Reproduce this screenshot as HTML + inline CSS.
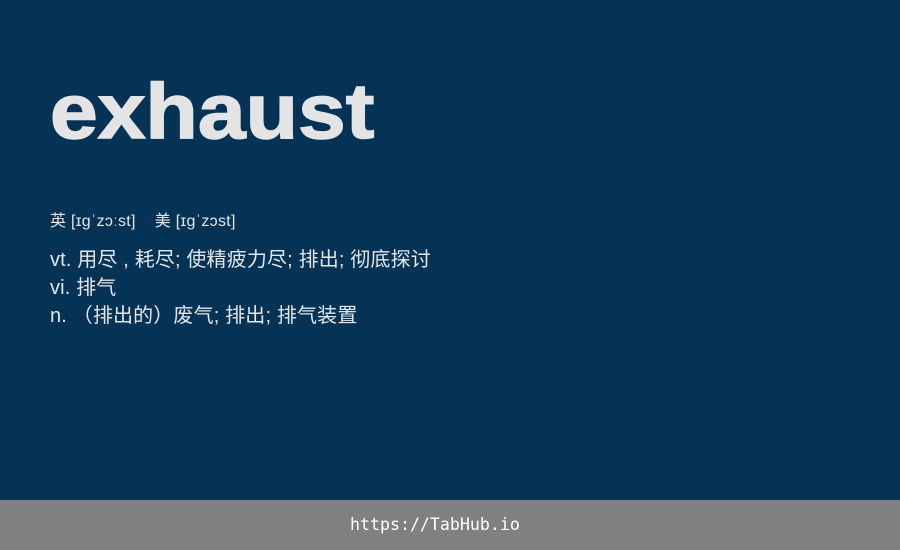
<!DOCTYPE html>
<html><head><meta charset="utf-8"><style>
html,body{margin:0;padding:0;}
body{width:900px;height:550px;background:#043355;position:relative;overflow:hidden;font-family:"Liberation Sans","Noto Sans CJK SC",sans-serif;color:#e6e6e6;}
.w{position:absolute;left:50px;top:61px;font-size:78px;font-weight:bold;line-height:100px;color:#e4e4e4;transform:scaleX(1.1);transform-origin:0 0;-webkit-text-stroke:1.5px #e4e4e4;}
.p{position:absolute;left:50px;top:212px;font-size:16px;line-height:20px;letter-spacing:0.3px;}
.d{position:absolute;left:50px;top:246px;font-size:20px;line-height:28px;letter-spacing:0.15px;}
.f{position:absolute;left:0;top:500px;width:900px;height:50px;background:#808080;}
.f span{position:absolute;left:350px;top:0;color:#fff;font-family:"DejaVu Sans Mono","Liberation Mono",monospace;font-size:16.6px;line-height:50px;}
</style></head><body>
<div class="w">exhaust</div>
<div class="p">英 [ɪgˈzɔːst]&nbsp;&nbsp;&nbsp; 美 [ɪgˈzɔst]</div>
<div class="d">vt. 用尽 , 耗尽; 使精疲力尽; 排出; 彻底探讨<br>vi. 排气<br>n. （排出的）废气; 排出; 排气装置</div>
<div class="f"><span>https://TabHub.io</span></div>
</body></html>
